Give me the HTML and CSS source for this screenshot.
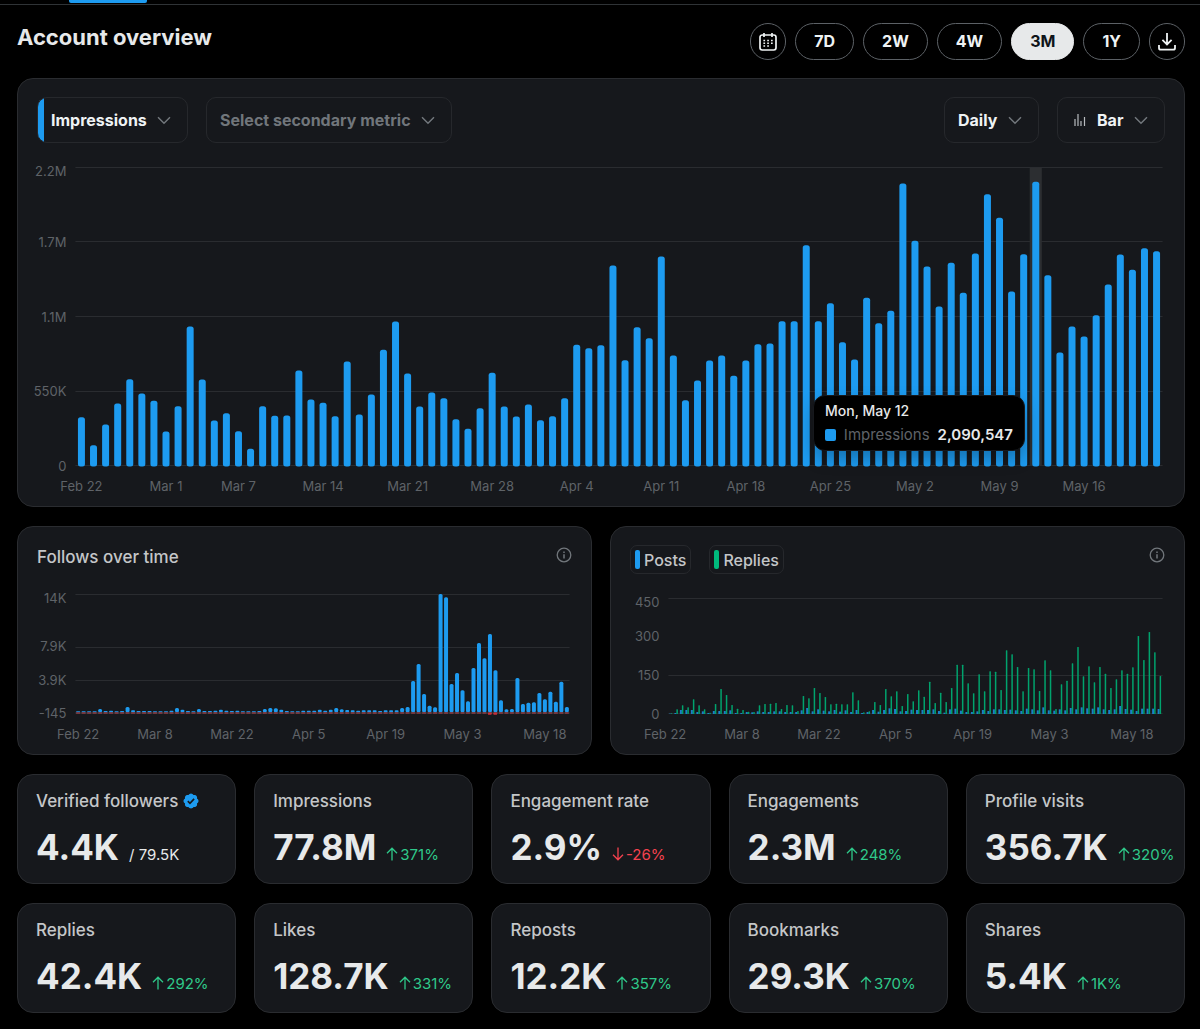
FILE: index.html
```html
<!DOCTYPE html>
<html lang="en">
<head>
<meta charset="utf-8">
<meta name="viewport" content="width=device-width, initial-scale=1">
<title>Account overview</title>
<link rel="stylesheet" href="styles.css">
</head>
<body>
<svg class="sprite" aria-hidden="true">
  <symbol id="chevron" viewBox="0 0 14 9"><path d="M1 1.2l6 6 6-6" fill="none" stroke="currentColor" stroke-width="1.5"/></symbol>
  <symbol id="info" viewBox="0 0 16 16"><circle cx="8" cy="8" r="6.8" fill="none" stroke="currentColor" stroke-width="1.3"/><path d="M8 7.2v4.2M8 4.4v1.5" stroke="currentColor" stroke-width="1.5"/></symbol>
  <symbol id="up" viewBox="0 0 12 14"><path d="M6 13.5V1.5M1 6.2l5-5 5 5" fill="none" stroke="currentColor" stroke-width="1.3"/></symbol>
  <symbol id="down" viewBox="0 0 12 14"><path d="M6 .5v12M1 7.8l5 5 5-5" fill="none" stroke="currentColor" stroke-width="1.3"/></symbol>
</svg>

<div class="tabs"><span class="tab-marker"></span></div>

<header class="top">
  <h1 class="title">Account overview</h1>
  <div class="ranges">
    <button class="pill round" type="button" aria-label="Pick dates">
      <svg width="18" height="18" viewBox="0 0 18 18" fill="none" stroke="currentColor"><rect x="1" y="2" width="16" height="15" rx="2.2" stroke-width="1.7"/><path d="M5 0v4M13 0v4" stroke-width="1.7"/><path d="M8.200 7.500h1.700M12 7.500h1.700M4.400 7.500h1.700M4.400 10.300h1.700M8.200 10.300h1.700M12 10.300h1.700M4.400 13.100h1.700M8.200 13.100h1.700" stroke-width="1.500"/></svg>
    </button>
    <button class="pill" type="button">7D</button>
    <button class="pill" type="button">2W</button>
    <button class="pill" type="button">4W</button>
    <button class="pill selected" type="button" aria-pressed="true">3M</button>
    <button class="pill" type="button">1Y</button>
    <button class="pill round" type="button" aria-label="Download">
      <svg width="18" height="18" viewBox="0 0 18 18" fill="none" stroke="currentColor" stroke-width="1.800"><path d="M9 0v11M4.400 6.800L9 11.400l4.600-4.600M1 12v3q0 1.700 1.700 1.700h12.600q1.700 0 1.700-1.700V12"/></svg>
    </button>
  </div>
</header>

<main class="board">
  <section class="panel main-panel">
    <div class="controls">
      <label class="picker accent">
        <select aria-label="Primary metric"><option>Impressions</option></select>
        <svg class="chevron"><use href="#chevron"/></svg>
      </label>
      <label class="picker muted">
        <select aria-label="Secondary metric"><option>Select secondary metric</option></select>
        <svg class="chevron"><use href="#chevron"/></svg>
      </label>
      <label class="picker end">
        <select aria-label="Interval"><option>Daily</option></select>
        <svg class="chevron"><use href="#chevron"/></svg>
      </label>
      <label class="picker with-icon">
        <svg class="kind" viewBox="0 0 12 12" stroke="currentColor" stroke-width="1.200"><path d="M1 5v7M4 0v12M7 7v5M10.500 3v9"/></svg>
        <select aria-label="Chart type"><option>Bar</option></select>
        <svg class="chevron"><use href="#chevron"/></svg>
      </label>
    </div>
    <div class="plot">
      <svg class="chart tall" id="impressions" role="img" aria-label="Impressions per day"></svg>
      <div class="tooltip" id="tooltip">
        <span class="tip-date">Mon, May 12</span>
        <span class="tip-row"><i class="swatch"></i><span class="tip-name">Impressions</span><b>2,090,547</b></span>
      </div>
    </div>
  </section>

  <div class="pair">
    <section class="panel">
      <div class="panel-head">
        <h2 class="label">Follows over time</h2>
        <svg class="info"><use href="#info"/></svg>
      </div>
      <svg class="chart short" id="follows" role="img" aria-label="Follows over time"></svg>
    </section>
    <section class="panel">
      <div class="panel-head">
        <div class="chips">
          <button class="chip blue" type="button">Posts</button>
          <button class="chip green" type="button">Replies</button>
        </div>
        <svg class="info"><use href="#info"/></svg>
      </div>
      <svg class="chart short" id="posts" role="img" aria-label="Posts and replies per day"></svg>
    </section>
  </div>

  <div class="stats">
    <article class="stat">
      <h2 class="label">Verified followers <svg class="badge" viewBox="1 1 20 20"><path fill="#1d9bf0" d="M20.396 11c-.018-.646-.215-1.275-.57-1.816-.354-.54-.852-.972-1.438-1.246.223-.607.270-1.264.140-1.897-.131-.634-.437-1.218-.882-1.687-.470-.445-1.053-.750-1.687-.882-.633-.130-1.290-.083-1.897.140-.273-.587-.704-1.086-1.245-1.440S11.647 1.620 11 1.604c-.646.017-1.273.213-1.813.568s-.969.854-1.240 1.440c-.608-.223-1.267-.272-1.902-.140-.635.130-1.220.436-1.690.882-.445.470-.749 1.055-.878 1.688-.130.633-.080 1.290.144 1.896-.587.274-1.087.705-1.443 1.245-.356.540-.555 1.170-.574 1.817.020.647.218 1.276.574 1.817.356.540.856.972 1.443 1.245-.224.606-.274 1.263-.144 1.896.130.634.433 1.218.877 1.688.470.443 1.054.747 1.687.878.633.132 1.290.084 1.897-.136.274.586.705 1.084 1.246 1.439.540.354 1.170.551 1.816.569.647-.016 1.276-.213 1.817-.567s.972-.854 1.245-1.440c.604.239 1.266.296 1.903.164.636-.132 1.220-.447 1.680-.907.460-.460.776-1.044.908-1.681s.075-1.299-.165-1.903c.586-.274 1.084-.705 1.439-1.246.354-.540.551-1.170.569-1.816z"/><path fill="none" stroke="#16181c" stroke-width="2" d="M7 11.200l2.700 2.700 5.200-5.600"/></svg></h2>
      <p class="value">4.4K <span class="total">/ 79.5K</span></p>
    </article>
    <article class="stat"><h2 class="label">Impressions</h2><p class="value">77.8M <span class="change"><svg><use href="#up"/></svg>371%</span></p></article>
    <article class="stat"><h2 class="label">Engagement rate</h2><p class="value">2.9% <span class="change drop"><svg><use href="#down"/></svg>-26%</span></p></article>
    <article class="stat"><h2 class="label">Engagements</h2><p class="value">2.3M <span class="change"><svg><use href="#up"/></svg>248%</span></p></article>
    <article class="stat"><h2 class="label">Profile visits</h2><p class="value">356.7K <span class="change"><svg><use href="#up"/></svg>320%</span></p></article>
    <article class="stat"><h2 class="label">Replies</h2><p class="value">42.4K <span class="change"><svg><use href="#up"/></svg>292%</span></p></article>
    <article class="stat"><h2 class="label">Likes</h2><p class="value">128.7K <span class="change"><svg><use href="#up"/></svg>331%</span></p></article>
    <article class="stat"><h2 class="label">Reposts</h2><p class="value">12.2K <span class="change"><svg><use href="#up"/></svg>357%</span></p></article>
    <article class="stat"><h2 class="label">Bookmarks</h2><p class="value">29.3K <span class="change"><svg><use href="#up"/></svg>370%</span></p></article>
    <article class="stat"><h2 class="label">Shares</h2><p class="value">5.4K <span class="change"><svg><use href="#up"/></svg>1K%</span></p></article>
  </div>
</main>
<script src="charts.js"></script>
</body>
</html>
```

FILE: styles.css
```css
* { box-sizing: border-box; }

body {
  margin: 0;
  background: #000;
  color: #e7e9ea;
  font-family: Inter, "Liberation Sans", sans-serif;
  font-size: 16px;
  line-height: 20px;
}

h1, h2, p { margin: 0; }
button, select { font: inherit; color: inherit; }

.sprite { display: none; }

.tabs {
  display: flex;
  height: 5px;
  padding-left: 69px;
  border-bottom: 1px solid #2f3336;
}

.tab-marker {
  width: 78px;
  height: 3px;
  background: #1d9bf0;
  border-radius: 0 0 2px 2px;
}

.top {
  display: flex;
  justify-content: space-between;
  align-items: flex-start;
  padding: 18px 15px 18px 17px;
}

.title {
  padding-top: 2px;
  font-size: 22px;
  line-height: 24px;
  font-weight: 700;
}

.ranges { display: flex; gap: 9px; }

.pill {
  height: 37px;
  padding: 0 18px 2px;
  border: 1px solid #5c6166;
  border-radius: 19px;
  background: none;
  color: #eff3f4;
  font-weight: 700;
}

.pill.round {
  display: grid;
  place-items: center;
  width: 36px;
  padding: 0;
}

.pill.selected {
  background: #e7e9ea;
  border-color: #e7e9ea;
  color: #0f1419;
}

.board {
  display: flex;
  flex-direction: column;
  gap: 19px;
  padding: 0 15px 16px 17px;
}

.panel, .stat {
  background: #16181c;
  border: 1px solid #2a2c30;
  border-radius: 16px;
}

.panel { padding: 18px 19px; }
.main-panel { padding-bottom: 8px; }

.controls { display: flex; gap: 18px; }

.picker {
  display: grid;
  align-items: center;
  height: 46px;
  border: 1px solid #26282c;
  border-radius: 10px;
  overflow: hidden;
  font-weight: 700;
  color: #eff3f4;
}

.picker.end { margin-left: auto; }
.picker.accent { background: linear-gradient(90deg, #1d9bf0 6px, transparent 6px); }
.picker.muted { color: #71767b; }

.picker select {
  grid-area: 1 / 1;
  height: 44px;
  padding: 0 40px 0 13px;
  border: 0;
  background: none;
  appearance: none;
}

.picker.with-icon select { padding-left: 39px; }

.chevron {
  grid-area: 1 / 1;
  justify-self: end;
  width: 14px;
  height: 9px;
  margin-right: 16px;
  color: #71767b;
  pointer-events: none;
}

.kind {
  grid-area: 1 / 1;
  width: 12px;
  height: 12px;
  margin-left: 16px;
  color: #b9bcbf;
}

.plot { position: relative; }

.chart {
  display: block;
  width: 100%;
  overflow: visible;
  font-size: 13px;
}

.chart text { fill: #5f6368; }
.tall { height: 355px; }
.short { height: 174px; }

.tooltip {
  position: absolute;
  top: 252px;
  display: flex;
  flex-direction: column;
  gap: 4px;
  width: 212px;
  padding: 5px 11px;
  border: 1px solid #16181c;
  border-radius: 12px;
  background: #000;
  box-shadow: 0 8px 16px rgba(0, 0, 0, 0.25);
  font-size: 14px;
}

.tip-date { font-weight: 500; }
.tip-row { display: flex; align-items: center; gap: 8px; font-size: 15px; }
.tip-name { color: #5f6368; }
.tip-row b { font-weight: 600; }

.swatch {
  width: 12px;
  height: 12px;
  border-radius: 2px;
  background: #1d9bf0;
}

.pair {
  display: grid;
  grid-template-columns: 1fr 1fr;
  gap: 18px;
}

.pair .panel { padding-bottom: 6px; }

.panel-head {
  display: flex;
  justify-content: space-between;
  height: 29px;
}

.label {
  font-size: 17px;
  font-weight: 500;
  line-height: 24px;
  color: #c4c6c8;
}

.info {
  width: 16px;
  height: 16px;
  margin-top: 2px;
  color: #71767b;
}

.chips { display: flex; gap: 18px; }

.chip {
  display: flex;
  align-items: center;
  gap: 4px;
  height: 29px;
  padding: 0 4px;
  border: 1px solid #26282c;
  border-radius: 7px;
  background: none;
  font-weight: 500;
  color: #c4c6c8;
}

.chip::before {
  content: "";
  width: 5px;
  height: 19px;
  border-radius: 2px;
  background: #1d9bf0;
}

.chip.green::before { background: #00ba7c; }

.stats {
  display: grid;
  grid-template-columns: repeat(5, 1fr);
  gap: 19px 18px;
}

.stat {
  min-height: 110px;
  padding: 14px 0 0 18px;
}

.badge {
  width: 16px;
  height: 16px;
  margin-top: -2px;
  vertical-align: middle;
}

.value {
  display: flex;
  align-items: baseline;
  gap: 10px;
  padding-top: 12px;
  font-size: 35px;
  line-height: 44px;
  font-weight: 700;
}

.total, .change {
  font-size: 15px;
  line-height: 20px;
  font-weight: 400;
}

.change { color: #2fc98a; }
.change.drop { color: #f4424f; }

.change svg {
  width: 12px;
  height: 14px;
  margin-right: 2px;
  vertical-align: -1px;
}
```

FILE: charts.js
```js
const BLUE = '#1d9bf0';
const GREEN = '#00a36d';

// Daily impressions, one unit is 2,455 impressions.
const impressions = [148,64,126,189,262,219,197,105,181,420,261,138,160,106,53,181,152,153,288,201,191,151,315,156,216,350,435,279,180,222,205,142,113,175,281,180,150,186,139,151,205,365,355,364,603,319,418,385,630,333,199,258,318,333,272,318,367,369,436,436,664,436,490,373,321,506,430,467,849,677,600,480,611,521,639,817,746,525,637,854,574,342,420,390,454,546,636,590,655,646];

// Daily new follows, one unit is 40 follows.
const follows = [3,3,3,3,10,4,5,3,4,16,6,4,4,4,3,3,3,5,13,8,4,3,10,4,4,5,8,5,4,5,3,3,3,4,10,13,12,8,4,3,3,5,5,5,8,5,8,13,9,7,6,5,6,6,6,4,6,6,6,13,16,94,145,55,20,15,355,345,85,118,66,33,133,208,162,235,126,36,9,10,103,25,29,30,58,39,62,32,92,16];

// Daily posts and replies, one unit is 1.3.
const posts = [1,3,12,12,12,6,8,3,9,9,9,11,3,3,6,5,8,6,6,8,8,6,6,6,11,18,8,14,10,8,12,7,11,6,12,3,6,12,7,12,17,15,8,9,13,12,12,12,14,9,4,14,16,10,6,6,8,12,9,14,14,12,13,11,9,16,14,11,20,11,10,14,11,18,14,20,17,16,20,14,12,14,24,15,13,9,16,16,16,15];
const replies = [2,14,26,20,44,26,14,4,30,75,57,27,16,12,7,6,26,30,31,33,15,27,26,9,54,47,78,63,51,29,31,29,29,65,41,5,8,36,27,75,53,68,24,60,38,71,52,97,33,64,36,78,148,148,92,62,119,68,128,127,72,191,179,141,68,138,134,69,161,131,15,89,100,152,201,113,143,95,141,121,78,104,131,121,140,234,162,246,185,114];

const SVG = 'http://www.w3.org/2000/svg';

function add(svg, name, attrs, text) {
  const el = document.createElementNS(SVG, name);
  for (const key in attrs) el.setAttribute(key, attrs[key]);
  if (text) el.textContent = text;
  svg.appendChild(el);
}

function bar(svg, x, bottom, width, height, fill, rx) {
  add(svg, 'rect', { x, y: bottom - height, width, height, fill, rx });
}

// Draws grid and axis texts, returns the width of a day and the plot's left edge.
function frame(svg, { left, right, lines, ticks, days, dayY, shift }) {
  svg.replaceChildren();
  const end = svg.clientWidth - right;
  const step = (end - left) / 90;
  lines.forEach(y => add(svg, 'rect', { x: left, y, width: end - left, height: 1, fill: '#2a2c30' }));
  ticks.forEach(([label, y]) => add(svg, 'text', { x: left - 9, y, 'text-anchor': 'end' }, label));
  days.forEach(([label, i]) => add(svg, 'text', { x: left + step * (i + 0.5) + shift, y: dayY, 'text-anchor': 'middle' }, label));
  return { step, left };
}

const fortnights = [['Feb 22', 0], ['Mar 8', 14], ['Mar 22', 28], ['Apr 5', 42], ['Apr 19', 56], ['May 3', 70], ['May 18', 85]];

function draw() {
  let svg = document.getElementById('impressions');
  let f = frame(svg, {
    left: 38.4, right: 2.4, shift: 0, dayY: 348,
    lines: [24, 98, 173, 248, 322],
    ticks: [['2.2M', 33], ['1.7M', 104], ['1.1M', 179], ['550K', 253], ['0', 328]],
    days: [['Feb 22', 0], ['Mar 1', 7], ['Mar 7', 13], ['Mar 14', 20], ['Mar 21', 27], ['Mar 28', 34], ['Apr 4', 41], ['Apr 11', 48], ['Apr 18', 55], ['Apr 25', 62], ['May 2', 69], ['May 9', 76], ['May 16', 83]]
  });
  const hovered = 79;
  add(svg, 'rect', { x: f.left + f.step * hovered, y: 25, width: f.step, height: 298, fill: '#2c2e31' });
  impressions.forEach((v, i) => bar(svg, f.left + f.step * (i + 0.5) - 3.5, 323.500, 7, v / 3, BLUE, 2.5));
  document.getElementById('tooltip').style.left = Math.round(f.left + f.step * hovered - 217) + 'px';

  svg = document.getElementById('follows');
  f = frame(svg, {
    left: 38.4, right: 2.4, shift: 0, dayY: 165,
    lines: [20, 73, 106, 138, 139],
    ticks: [['14K', 29], ['7.9K', 77], ['3.9K', 111], ['-145', 144]],
    days: fortnights
  });
  follows.forEach((v, i) => {
    const x = f.left + f.step * (i + 0.5) - 2;
    bar(svg, x, 138.300, 4, v / 3, BLUE, Math.min(1.5, v / 6));
    add(svg, 'rect', { x, y: 138.300, width: 4, height: 1.5, fill: '#8c3a42', rx: 0.5 });
    if (i === 75 || i === 76) add(svg, 'rect', { x, y: 138.800, width: 3.5, height: 2, fill: '#c72e38', rx: 0.5 });
  });

  svg = document.getElementById('posts');
  f = frame(svg, {
    left: 38.4, right: 2.4, shift: -6, dayY: 165,
    lines: [24, 101, 139],
    ticks: [['450', 33], ['300', 67], ['150', 106], ['0', 145]],
    days: fortnights
  });
  replies.forEach((v, i) => {
    const x = f.left + f.step * i;
    bar(svg, x + 0.5, 140, 2, posts[i] / 3, '#1b7fc8', 0);
    bar(svg, x + 2.5, 140, 1.5, v / 3, GREEN, 0.5);
  });
}

draw();
window.addEventListener('resize', draw);
```
